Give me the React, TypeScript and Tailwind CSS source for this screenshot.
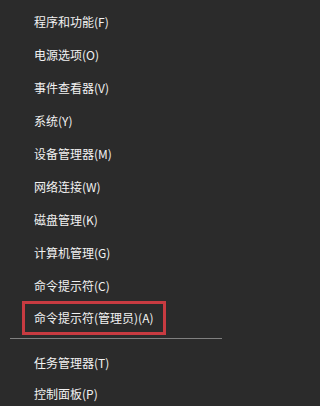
import React from 'react';

const topItems = [
  '程序和功能(F)',
  '电源选项(O)',
  '事件查看器(V)',
  '系统(Y)',
  '设备管理器(M)',
  '网络连接(W)',
  '磁盘管理(K)',
  '计算机管理(G)',
  '命令提示符(C)',
];

const bottomItems = ['任务管理器(T)', '控制面板(P)'];

function MenuItem({ label, tall = true }: { label: string; tall?: boolean }) {
  return (
    <div className={`flex items-center pl-[34px] ${tall ? 'h-[33px]' : 'h-[31px]'}`}>
      <span>{label}</span>
    </div>
  );
}

export default function App() {
  return (
    <div
      className="w-full min-w-[229px] h-[406px] overflow-hidden bg-[#2b2b2b] text-[#f2f2f2] text-[12px] leading-none pt-[5px]"
      style={{ fontFamily: '"Microsoft YaHei", "Noto Sans CJK SC", "Noto Sans", sans-serif' }}
    >
      {topItems.map((label) => (
        <MenuItem key={label} label={label} />
      ))}

      {/* highlighted entry */}
      <div className="flex items-center h-[34px] -mt-px ml-[22px] w-[144px] border-[3px] border-[#c83b41] pl-[9px]">
        <span>命令提示符(管理员)(A)</span>
      </div>

      {/* separator */}
      <div className="mt-[3px] mx-[10px] w-[212px] h-px bg-[#808080]" />

      <div className="pt-[8px]">
        {bottomItems.map((label) => (
          <MenuItem key={label} label={label} tall={false} />
        ))}
      </div>
    </div>
  );
}
